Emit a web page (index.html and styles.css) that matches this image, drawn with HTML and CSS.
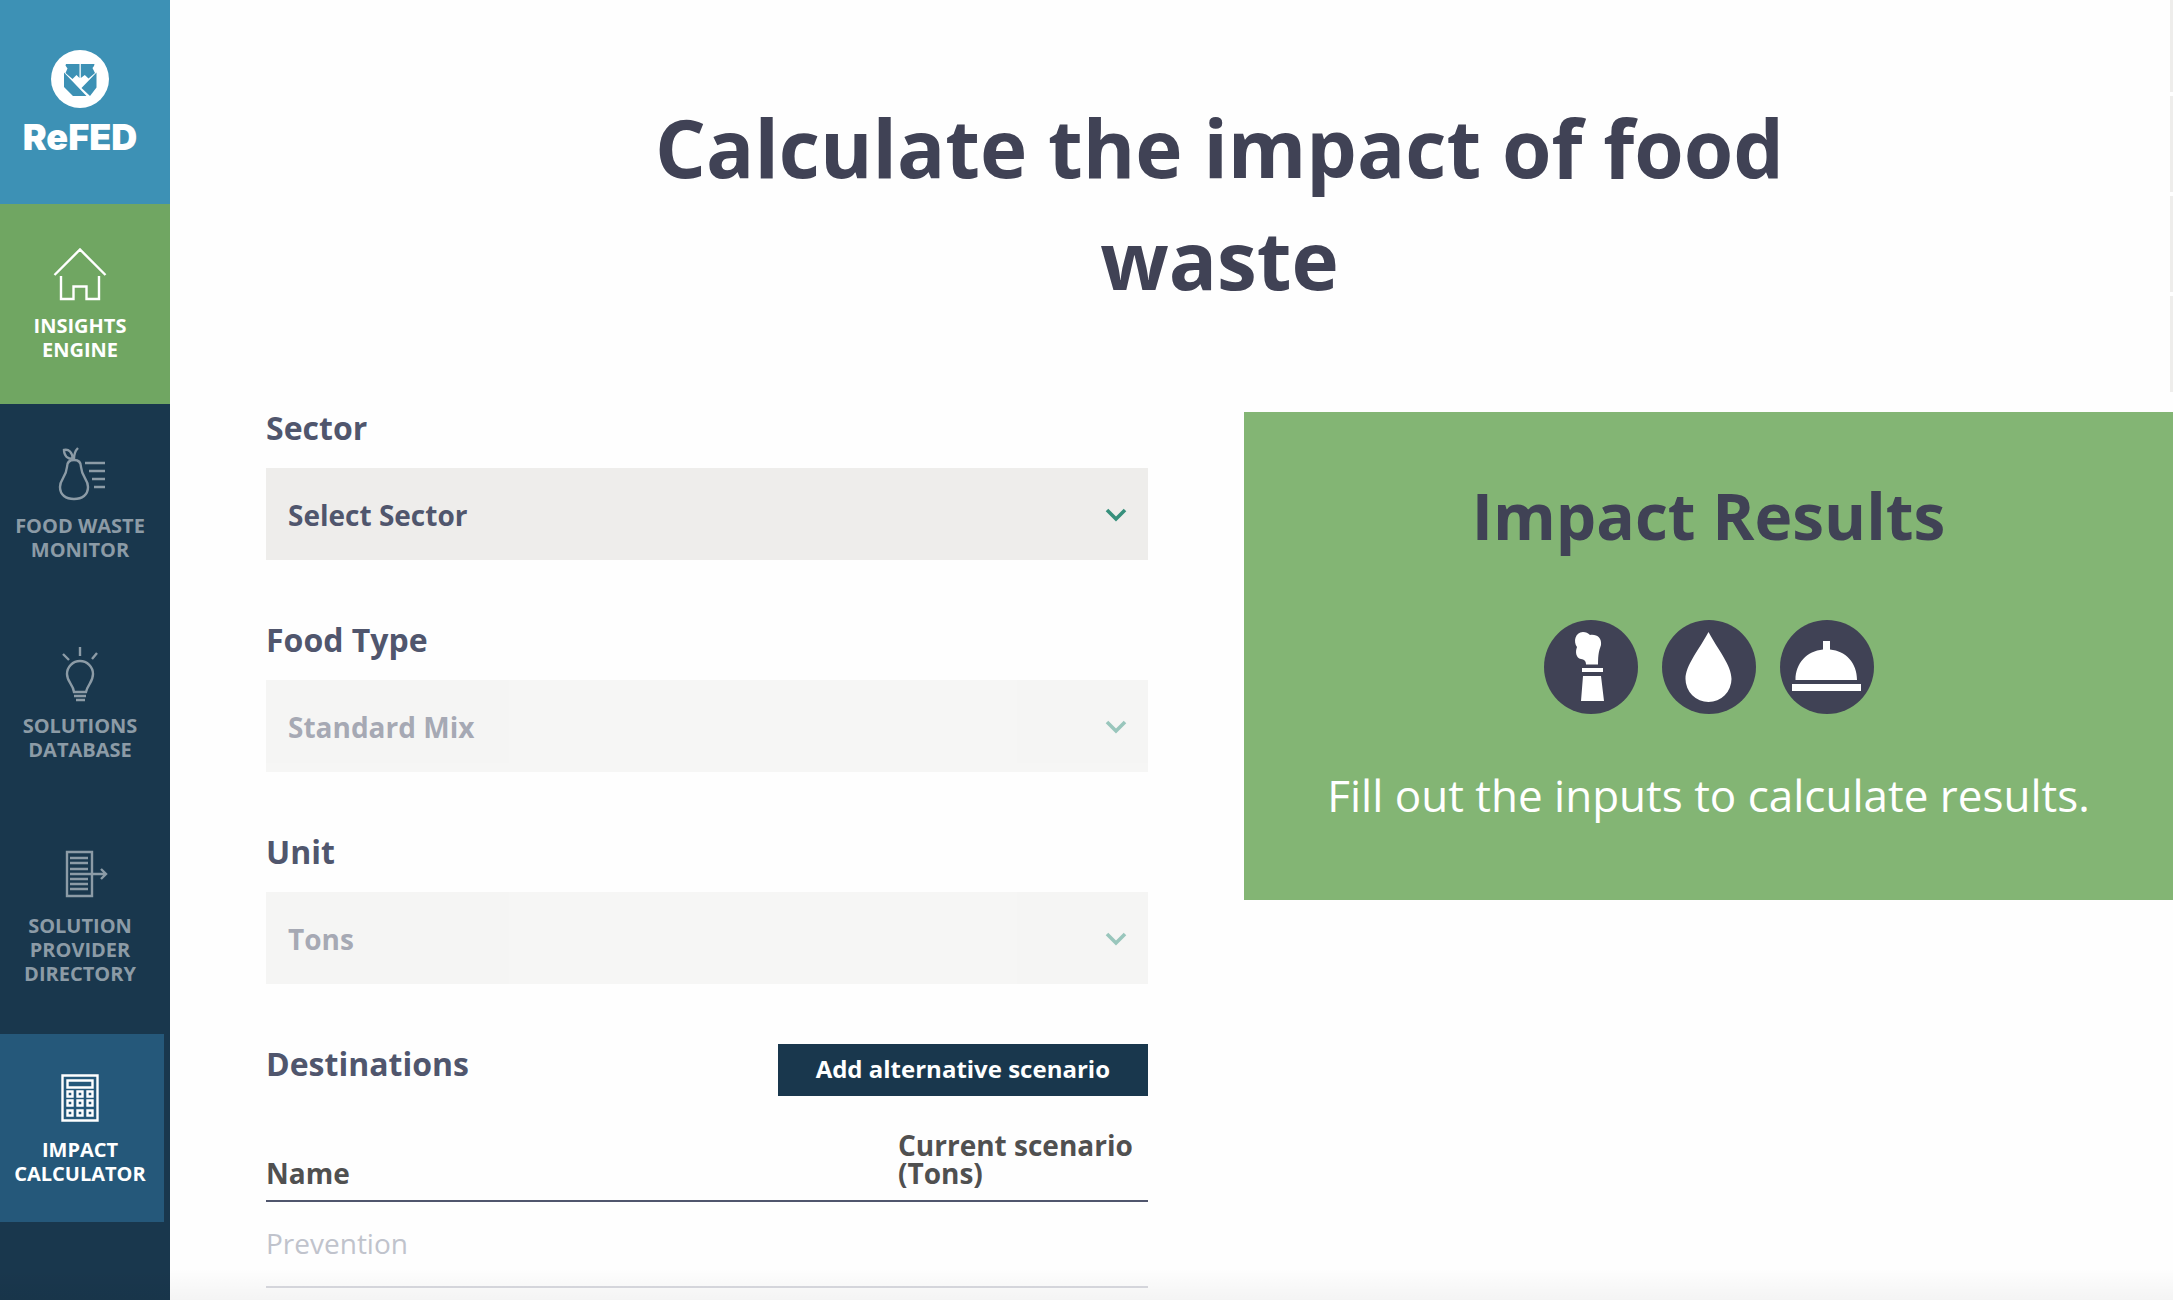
FILE: index.html
```html
<!DOCTYPE html>
<html lang="en">
<head>
<meta charset="utf-8">
<meta name="viewport" content="width=device-width, initial-scale=1">
<title>ReFED Impact Calculator</title>
<link rel="stylesheet" href="styles.css">
</head>
<body>
<div class="app">
  <nav class="sidebar" aria-label="Main">
    <a class="brand" href="#">
      <svg class="brand-mark" viewBox="0 0 58 58" aria-hidden="true">
        <circle cx="29" cy="29" r="29" fill="#fff"/>
        <path d="M15 14h13.500v14l-3-3-4 4-7-6 2-4.500-2-3z M29.800 14H43.500l-.5 2-1.500 2 2.500 5-6.500 5.500-3.700-3.500-4 3z M13 22.500L35.500 46H22l-9-9z M45.500 22.500V37.500l-6.500 8.500L30.500 38z" fill="#3d91b5"/>
      </svg>
      <span class="brand-name">ReFED</span>
    </a>
    <a class="nav-item nav-home" href="#">
      <svg class="nav-icon" viewBox="0 0 56 60" aria-hidden="true"><path d="M2.500 29L28 3.500 53.500 29M9 30v23h12.500V40.500h13V53H47V30"/></svg>
      <span>Insights Engine</span>
    </a>
    <a class="nav-item" href="#">
      <svg class="nav-icon" viewBox="0 0 56 60" aria-hidden="true"><path d="M22 14c-5 0-7 3-7 7-1 11-7 12-7 20 0 8 6 12 14 12s14-4 14-12c0-8-6-9-7-20 0-4-2-7-7-7zM21 13c-1-7-4-10-9-9 0 6 4 9 9 9zM22 13c0-5 1-8 4-11M33 17h20M37 25h16M40 33h13M42 41h11"/></svg>
      <span>Food Waste Monitor</span>
    </a>
    <a class="nav-item" href="#">
      <svg class="nav-icon" viewBox="0 0 56 60" aria-hidden="true"><path d="M28 1v9M11 8l6 6M45 7l-5 6M22 46c-1-8-7-10-7-18a13 13 0 0 1 26 0c0 8-5 10-7 18zM22 50h12M24 54h9"/></svg>
      <span>Solutions Database</span>
    </a>
    <a class="nav-item" href="#">
      <svg class="nav-icon" viewBox="0 0 56 60" aria-hidden="true"><path d="M15 6h25v44H15zM18 12h18M18 17h18M18 23h18M18 28h36M18 33h18M18 38h18M18 43h18M49 23l5 5-5 5"/></svg>
      <span>Solution Provider Directory</span>
    </a>
    <a class="nav-item nav-active" href="#" aria-current="page">
      <svg class="nav-icon" viewBox="0 0 56 60" aria-hidden="true"><path d="M10.500 5.500h35v45h-35zM15.500 10.500h25v7h-25zM15.500 21.500h5v5h-5zM25.500 21.500h5v5h-5zM35.500 21.500h5v5h-5zM15.500 30.500h5v5h-5zM25.500 30.500h5v5h-5zM35.500 30.500h5v5h-5zM15.500 40.500h5v5h-5zM25.500 40.500h5v5h-5zM35.500 40.500h5v5h-5z"/></svg>
      <span>Impact Calculator</span>
    </a>
  </nav>

  <main class="main">
    <h1 class="title">Calculate the impact of food waste</h1>
    <div class="columns">
      <form class="form">
        <div class="field">
          <label for="sector">Sector</label>
          <div class="select-box">
            <select id="sector"><option>Select Sector</option></select>
            <svg class="chevron" viewBox="0 0 20 12" aria-hidden="true"><path d="M1 2l9 9 9-9"/></svg>
          </div>
        </div>
        <div class="field">
          <label for="food">Food Type</label>
          <div class="select-box is-disabled">
            <select id="food" disabled><option>Standard Mix</option></select>
            <svg class="chevron" viewBox="0 0 20 12" aria-hidden="true"><path d="M1 2l9 9 9-9"/></svg>
          </div>
        </div>
        <div class="field">
          <label for="unit">Unit</label>
          <div class="select-box is-disabled">
            <select id="unit" disabled><option>Tons</option></select>
            <svg class="chevron" viewBox="0 0 20 12" aria-hidden="true"><path d="M1 2l9 9 9-9"/></svg>
          </div>
        </div>
        <div class="destinations">
          <h2>Destinations</h2>
          <button type="button">Add alternative scenario</button>
        </div>
        <table class="scenarios">
          <thead><tr><th scope="col">Name</th><th scope="col" class="amount">Current scenario (Tons)</th></tr></thead>
          <tbody><tr><td>Prevention</td><td></td></tr></tbody>
        </table>
      </form>

      <section class="results">
        <h2>Impact Results</h2>
        <div class="result-icons">
          <svg viewBox="0 0 94 94" aria-hidden="true"><circle cx="47" cy="47" r="47" fill="#404255"/><path fill="#fff" d="M42 44.500c0-4-2-5-5-5.500-5-1-6-7-4-12-4-5-2-15 6-15 3 0 5 1 7 3 7-1 12 3 11 10-2 6-3 9-3 19.500zM38 48h21v4H38zM39 56h18l3 25H37z"/></svg>
          <svg viewBox="0 0 94 94" aria-hidden="true"><circle cx="47" cy="47" r="47" fill="#404255"/><path fill="#fff" d="M46.500 12C56 30 69.500 45 69.500 59a23 23 0 0 1-46 0C23.500 45 37 30 46.500 12z"/></svg>
          <svg viewBox="0 0 94 94" aria-hidden="true"><circle cx="47" cy="47" r="47" fill="#404255"/><path fill="#fff" d="M43 21h7v8.500C66 31 77 43 77 60H15.500C15.500 43 27 31 43 29.500zM12 64h69v7H12z"/></svg>
        </div>
        <p>Fill out the inputs to calculate results.</p>
      </section>
    </div>
  </main>
  <div class="side-tabs" aria-hidden="true"><i></i><i></i><i></i><i></i></div>
  <div class="page-fade" aria-hidden="true"></div>
</div>
</body>
</html>
```
FILE: styles.css
```css
* { box-sizing: border-box; }

body {
  margin: 0;
  background: #fefefe;
  color: #50566d;
  font-family: "Open Sans", "Noto Sans", sans-serif;
}

h1, h2, p { margin: 0; }

.app {
  display: flex;
  height: 100vh;
  overflow: hidden;
}

/* Sidebar */
.sidebar {
  flex: none;
  width: 170px;
  background: #19374d;
}

.sidebar a {
  color: #fff;
  text-decoration: none;
}

.brand {
  display: flex;
  flex-direction: column;
  align-items: center;
  height: 204px;
  padding: 50px 10px 0 0;
  background: #3d91b5;
}

.brand-mark { width: 58px; height: 58px; }

.brand-name {
  margin-top: 9px;
  font: 900 36px/40px Inter, sans-serif;
}

.sidebar .nav-item {
  display: flex;
  flex-direction: column;
  align-items: center;
  padding: 42px 10px 42px 0;
  color: #8c9ba6;
  font-size: 20px;
  font-weight: 700;
  line-height: 24px;
  text-align: center;
  text-transform: uppercase;
}

.nav-item span { width: 140px; margin-top: 8px; }

.nav-icon {
  width: 56px;
  height: 60px;
  fill: none;
  stroke: currentColor;
  stroke-width: 2.4;
}

.sidebar .nav-home {
  background: #70a662;
  color: #fff;
}

.sidebar .nav-active {
  margin: 6px 6px 0 0;
  padding: 36px 4px 36px 0;
  background: #25587a;
  color: #fff;
}

/* Content */
.main {
  flex: 1;
  min-width: 0;
  padding: 91px 0 0 96px;
}

.title {
  max-width: 1320px;
  margin: 0 auto 97px;
  color: #404255;
  font-size: 80px;
  line-height: 112px;
  text-align: center;
}

.columns {
  display: grid;
  grid-template-columns: 882fr 929fr;
  gap: 96px;
  align-items: start;
}

.field { margin-bottom: 64px; }

.field label,
.destinations h2 {
  display: block;
  font-size: 32px;
  font-weight: 700;
  line-height: 32px;
}

.field label { margin-bottom: 24px; }

.select-box {
  display: grid;
  align-items: center;
  background: #eeedeb;
}

.select-box > * { grid-area: 1 / 1; }

.select-box select {
  width: 100%;
  height: 92px;
  padding: 2px 22px 0;
  border: 0;
  background: none;
  color: #50566d;
  font: inherit;
  font-size: 28px;
  font-weight: 700;
  appearance: none;
  opacity: 1;
}

.chevron {
  justify-self: end;
  width: 20px;
  height: 12px;
  margin-right: 22px;
  overflow: visible;
  fill: none;
  stroke: #37907c;
  stroke-width: 3.6;
  pointer-events: none;
}

.is-disabled { opacity: 0.5; }

.destinations {
  display: flex;
  align-items: flex-start;
  justify-content: space-between;
  margin-top: -4px;
}

.destinations h2 { padding-top: 4px; }

.destinations button {
  padding: 0 38px 2px;
  border: 0;
  background: #19374d;
  color: #fff;
  font: inherit;
  font-size: 24px;
  font-weight: 700;
  line-height: 50px;
}

.scenarios {
  width: 100%;
  margin-top: 35px;
  border-collapse: collapse;
  font-size: 28px;
  line-height: 28px;
  text-align: left;
}

.scenarios th {
  padding: 0 0 13px;
  border-bottom: 2px solid #50566d;
  color: #505050;
  vertical-align: bottom;
}

.scenarios .amount { width: 250px; }

.scenarios td {
  padding: 27px 0 29px;
  border-bottom: 2px solid #d9dae0;
  color: #c0c3cc;
}

.results {
  display: flex;
  flex-direction: column;
  align-items: center;
  padding: 59px 24px 73px;
  background: #83b574;
  text-align: center;
}

.results h2 {
  color: #404255;
  font-size: 64px;
  line-height: 90px;
}

.result-icons {
  display: flex;
  gap: 24px;
  margin: 59px 0 49px;
}

.result-icons svg { width: 94px; height: 94px; }

.results p {
  color: #fff;
  font-size: 44px;
  line-height: 64px;
}

/* Edge of the collapsed side drawer */
.side-tabs {
  position: absolute;
  top: -4px;
  right: 0;
  width: 3px;
}

.side-tabs i {
  display: block;
  height: 96px;
  margin-bottom: 4px;
  background: #eeedeb;
}

.page-fade {
  position: absolute;
  right: 0;
  bottom: 0;
  left: 0;
  height: 32px;
  background: linear-gradient(transparent, rgba(0, 0, 0, 0.04));
  pointer-events: none;
}
```
